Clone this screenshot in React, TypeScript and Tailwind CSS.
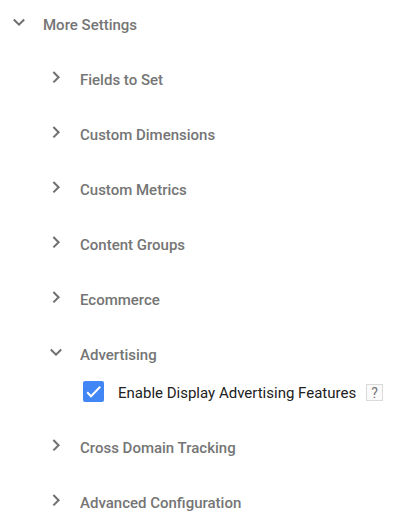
import { useState } from "react";

function Chevron({ open }: { open: boolean }) {
  return (
    <svg
      viewBox="0 0 14 14"
      className="mb-1.5 size-3.5 shrink-0"
      fill="none"
      stroke="#6f6f6f"
      strokeWidth="2"
      aria-hidden="true"
    >
      {open ? <path d="M1.8 4.5 7 9.7l5.2-5.2" /> : <path d="M4.4 2 9.6 7.2 4.4 12.4" />}
    </svg>
  );
}

function SectionButton({
  label,
  open,
  onToggle,
}: {
  label: string;
  open: boolean;
  onToggle: () => void;
}) {
  return (
    <button
      type="button"
      aria-expanded={open}
      onClick={onToggle}
      className="flex h-6 items-center gap-[17px] text-left text-[15px] leading-6 font-medium text-[#757575]"
    >
      <Chevron open={open} />
      {label}
    </button>
  );
}

function AdvertisingOption() {
  return (
    <div className="mt-3.5 ml-[34px] flex h-6 items-center text-[15px] leading-6 text-[#212121]">
      <span className="mb-[3px] grid shrink-0">
        <input
          id="display-features"
          type="checkbox"
          defaultChecked
          className="peer col-start-1 row-start-1 size-[21px] appearance-none rounded-xs border-2 border-[#757575] bg-white checked:border-[#4285f4] checked:bg-[#4285f4]"
        />
        <svg
          viewBox="0 0 21 21"
          className="pointer-events-none invisible col-start-1 row-start-1 size-[21px] peer-checked:visible"
          fill="none"
          stroke="white"
          strokeWidth="2"
          aria-hidden="true"
        >
          <path d="m4.2 11.3 3.8 3.9 9.2-9.4" />
        </svg>
      </span>
      <label htmlFor="display-features" className="ml-3.5 whitespace-nowrap">
        Enable Display Advertising Features
      </label>
      <button
        type="button"
        aria-label="Help"
        className="mb-px ml-2.5 flex size-[17px] shrink-0 items-center justify-center border border-[#dadada] bg-[#fafafa] text-sm leading-none text-[#757575]"
      >
        ?
      </button>
    </div>
  );
}

const sections = [
  "Fields to Set",
  "Custom Dimensions",
  "Custom Metrics",
  "Content Groups",
  "Ecommerce",
  "Advertising",
  "Cross Domain Tracking",
  "Advanced Configuration",
];

export default function App() {
  const [expanded, setExpanded] = useState(true);
  const [openSections, setOpenSections] = useState<string[]>(["Advertising"]);

  const toggle = (name: string) =>
    setOpenSections((current) =>
      current.includes(name) ? current.filter((item) => item !== name) : [...current, name],
    );

  return (
    <main className="min-h-screen bg-white px-3 pt-[13px] font-['Roboto',sans-serif]">
      <SectionButton label="More Settings" open={expanded} onToggle={() => setExpanded(!expanded)} />
      {expanded && (
        <ul className="mt-[31px] ml-[37px] flex flex-col gap-[31px]">
          {sections.map((name) => {
            const open = openSections.includes(name);
            return (
              <li key={name}>
                <SectionButton label={name} open={open} onToggle={() => toggle(name)} />
                {open && name === "Advertising" && <AdvertisingOption />}
              </li>
            );
          })}
        </ul>
      )}
    </main>
  );
}
